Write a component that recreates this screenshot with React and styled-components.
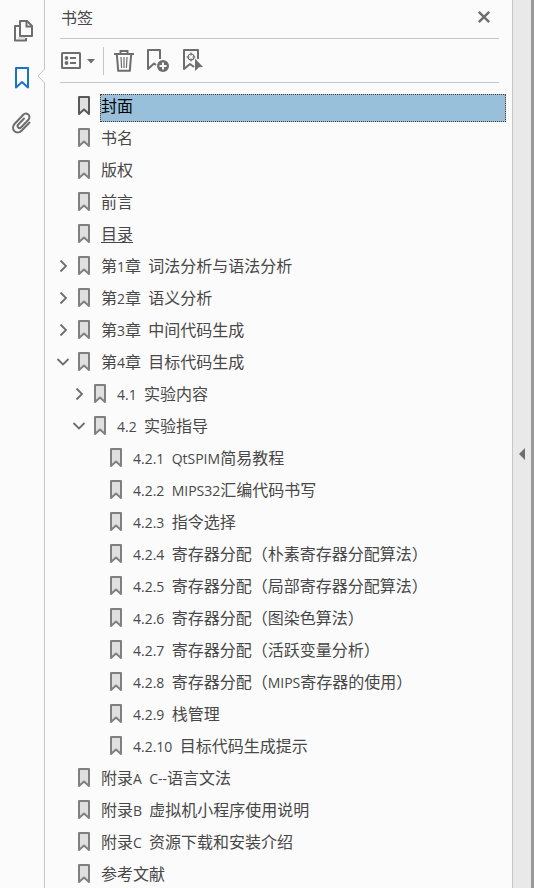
import React, { useState } from 'react';
import styled, { createGlobalStyle } from 'styled-components';

const GlobalStyle = createGlobalStyle`
  * {
    box-sizing: border-box;
  }
  body {
    margin: 0;
    background: #fbfbfb;
    color: #484848;
    font-family: "Noto Sans CJK SC", "Noto Sans", sans-serif;
    font-size: 16px;
  }
  svg {
    display: block;
    overflow: visible;
  }
`;

const Layout = styled.div`
  display: flex;
  height: 100vh;
  overflow: hidden;
`;

const Rail = styled.nav`
  display: flex;
  flex-direction: column;
  align-items: center;
  flex: none;
  width: 45px;
  padding-top: 8px;
  border-right: 1px solid #c6c6c6;
`;

const PlainButton = styled.button`
  display: flex;
  align-items: center;
  justify-content: center;
  flex: none;
  padding: 0;
  border: none;
  background: none;
  color: #6e6e6e;
  cursor: pointer;
`;

const RailButton = styled(PlainButton)`
  position: relative;
  width: 44px;
  height: 46px;
  color: ${({ $active }) => ($active ? '#1a73c8' : '#6e6e6e')};
`;

const Notch = styled.svg`
  position: absolute;
  top: 15px;
  right: -1px;
`;

const Panel = styled.section`
  display: flex;
  flex-direction: column;
  flex: 1;
  min-width: 0;
`;

const Header = styled.header`
  display: flex;
  align-items: center;
  justify-content: space-between;
  flex: none;
  height: 39px;
  margin: 0 13px 0 15px;
  padding-bottom: 5px;
  border-bottom: 1px solid #c6c6c6;
`;

const Title = styled.h1`
  margin: 0;
  padding-left: 1px;
  font-size: 16px;
  font-weight: 400;
  line-height: 24px;
`;

const CloseButton = styled(PlainButton)`
  width: 30px;
  height: 24px;
`;

const Toolbar = styled.div`
  display: flex;
  align-items: center;
  flex: none;
  height: 44px;
  margin: 0 13px 0 15px;
  border-bottom: 1px solid #c6c6c6;
`;

const ToolButton = styled(PlainButton)`
  width: ${({ $width }) => $width}px;
  height: 28px;
`;

const Divider = styled.span`
  width: 1px;
  height: 28px;
  margin: 0 8px 0 7px;
  background: #c6c6c6;
`;

const Tree = styled.ul`
  margin: 0;
  padding: ${({ $nested }) => ($nested ? '0 0 0 16px' : '11px 6px 0 10px')};
  list-style: none;
`;

const Row = styled.div`
  display: flex;
  align-items: flex-start;
  height: 32px;
`;

const Toggle = styled(PlainButton)`
  width: 16px;
  height: 24px;
  margin-right: 7px;
  visibility: ${({ $hidden }) => ($hidden ? 'hidden' : 'visible')};
`;

const Mark = styled.svg`
  flex: none;
  margin: 2px 10px 0 0;
  color: ${({ $selected }) => ($selected ? '#5a5a5a' : '#808080')};
`;

const Label = styled.a`
  flex: 1;
  min-width: 0;
  height: 28px;
  border: 1px dotted ${({ $selected }) => ($selected ? '#5b3a2e' : 'transparent')};
  background: ${({ $selected }) => ($selected ? '#99c0da' : 'none')};
  color: ${({ $selected }) => ($selected ? '#000' : 'inherit')};
  line-height: 20px;
  text-decoration: ${({ $underlined }) => ($underlined ? 'underline' : 'none')};
  text-underline-offset: 2px;
  white-space: pre;
`;

const Latin = styled.span`
  font-family: "Open Sans", "Noto Sans", sans-serif;
  font-size: 14px;
`;

const Splitter = styled.div`
  display: flex;
  flex: none;
  width: 22px;
  border-left: 1px solid #c6c6c6;
  border-right: 3px solid #999;
  background: #e9e9e9;
`;

const SplitterButton = styled(PlainButton)`
  width: 18px;
  padding-top: 20px;
`;

const bookmarks = [
  { title: '封面' },
  { title: '书名' },
  { title: '版权' },
  { title: '前言' },
  { title: '目录', underlined: true },
  { title: '第1章  词法分析与语法分析', children: [] },
  { title: '第2章  语义分析', children: [] },
  { title: '第3章  中间代码生成', children: [] },
  {
    title: '第4章  目标代码生成',
    open: true,
    children: [
      { title: '4.1  实验内容', children: [] },
      {
        title: '4.2  实验指导',
        open: true,
        children: [
          { title: '4.2.1  QtSPIM简易教程' },
          { title: '4.2.2  MIPS32汇编代码书写' },
          { title: '4.2.3  指令选择' },
          { title: '4.2.4  寄存器分配（朴素寄存器分配算法）' },
          { title: '4.2.5  寄存器分配（局部寄存器分配算法）' },
          { title: '4.2.6  寄存器分配（图染色算法）' },
          { title: '4.2.7  寄存器分配（活跃变量分析）' },
          { title: '4.2.8  寄存器分配（MIPS寄存器的使用）' },
          { title: '4.2.9  栈管理' },
          { title: '4.2.10  目标代码生成提示' },
        ],
      },
    ],
  },
  { title: '附录A  C--语言文法' },
  { title: '附录B  虚拟机小程序使用说明' },
  { title: '附录C  资源下载和安装介绍' },
  { title: '参考文献' },
];

// digits and latin letters are set smaller than the chinese text
const renderTitle = (title) => title
  .split(/([\x20-\x7e]+)/)
  .filter(Boolean)
  .map((part) => (/^[\x20-\x7e]/.test(part) ? <Latin key={part}>{part}</Latin> : part));

const PagesIcon = () => (
  <svg width="18" height="22" viewBox="1 0 18 22" fill="none" stroke="currentColor" strokeWidth="2">
    <path d="M7 6H3v14.500h11V18" strokeLinejoin="round" />
    <path d="M6 18h7" stroke="#dcdcdc" />
    <path d="M8 1h7l5 5v10H8z" fill="#fbfbfb" strokeLinejoin="round" />
    <path d="M14.500 1v5.500H20" />
  </svg>
);

const RailBookmarkIcon = () => (
  <svg width="14" height="20" viewBox="0 0 14 20" fill="none" stroke="currentColor" strokeWidth="2">
    <path d="M1 1h12v19.500L7 15l-6 5.500z" strokeLinejoin="round" />
  </svg>
);

const ClipIcon = () => (
  <svg width="20" height="22" viewBox="0 0 20 22" fill="none" stroke="currentColor" strokeWidth="2" strokeLinecap="round">
    <path d="M17.500 10.500l-8 8.200c-2 2-5 2.300-7 .5s-2-5 0-7.200l8.500-9c1.500-1.600 3.800-1.700 5.300-.4s1.500 3.600.1 5.200l-7.200 7.500c-.9.900-2.200 1-3 .2s-.8-2.100.1-3l5.700-6" />
  </svg>
);

const CloseIcon = () => (
  <svg width="12" height="12" viewBox="0 0 12 12" fill="none" stroke="currentColor" strokeWidth="2.400">
    <path d="M.8.8l10.400 10.400M11.200.8L.8 11.200" />
  </svg>
);

const OptionsIcon = () => (
  <svg width="34" height="18" viewBox="0 0 34 18" fill="none" stroke="currentColor" strokeWidth="2">
    <rect x="1" y="1" width="18" height="15" rx=".5" />
    <circle cx="5.500" cy="6" r="1.900" fill="currentColor" stroke="none" />
    <circle cx="5.500" cy="11" r="1.900" fill="currentColor" stroke="none" />
    <path d="M9 6h6M9 11h6" />
    <path d="M26 7h8l-4 4.500z" fill="currentColor" stroke="none" />
  </svg>
);

const TrashIcon = () => (
  <svg width="20" height="22" viewBox="0 0 20 22" fill="none" stroke="currentColor" strokeWidth="2">
    <path d="M0 4h20M6.500 4V1h7v3" />
    <path d="M2.800 4l1.400 16.800h11.600L17.200 4" strokeLinejoin="round" />
    <path d="M7 7l.6 11M10 7v11M13 7l-.6 11" strokeWidth="1.200" />
  </svg>
);

const AddBookmarkIcon = () => (
  <svg width="22" height="23" viewBox="0 0 22 23" fill="none" stroke="currentColor" strokeWidth="2">
    <path d="M13 10V1H1v19l6-5.500 2 1.500" strokeLinejoin="round" />
    <circle cx="16" cy="17" r="6" fill="currentColor" stroke="none" />
    <path d="M12.500 17h7M16 13.500v7" stroke="#fbfbfb" />
  </svg>
);

const FindBookmarkIcon = () => (
  <svg width="20" height="23" viewBox="0 0 20 23" fill="none" stroke="currentColor" strokeWidth="2">
    <path d="M15 10V1H1v19l6-5 4 3" strokeLinejoin="round" />
    <circle cx="8" cy="8" r="3" strokeWidth="1.200" />
    <path d="M8 3.500v3M8 9.500v3M3.500 8h3M9.500 8h3" strokeWidth="1.200" />
    <path d="M12 9.500l8 8.500-4 .3-4 3.700z" fill="currentColor" stroke="none" />
  </svg>
);

const Chevron = ({ open }) => (
  <svg width="12" height="12" viewBox="0 0 12 12" fill="none" stroke="currentColor" strokeWidth="1.800">
    <path d={open ? 'M.5 3L6 8.500 11.500 3' : 'M3.500.5L9 6l-5.500 5.500'} />
  </svg>
);

const BookmarkNode = ({ node, selected, onSelect }) => {
  const [open, setOpen] = useState(Boolean(node.open));
  const isSelected = selected === node.title;

  return (
    <li>
      <Row>
        <Toggle
          type="button"
          aria-label={open ? '折叠' : '展开'}
          aria-expanded={open}
          $hidden={!node.children}
          onClick={() => setOpen(!open)}
        >
          <Chevron open={open} />
        </Toggle>
        <Mark width="12" height="20" viewBox="0 0 12 20" $selected={isSelected}>
          <path d="M1 1h10v17l-5-4.500L1 18z" fill="#e0e0e0" stroke="currentColor" strokeWidth="2" strokeLinejoin="round" />
        </Mark>
        <Label
          href="#"
          $selected={isSelected}
          $underlined={node.underlined}
          onClick={() => onSelect(node.title)}
        >
          {renderTitle(node.title)}
        </Label>
      </Row>
      {open && node.children.length > 0 && (
        <Tree $nested>
          {node.children.map((child) => (
            <BookmarkNode key={child.title} node={child} selected={selected} onSelect={onSelect} />
          ))}
        </Tree>
      )}
    </li>
  );
};

const App = () => {
  const [selected, setSelected] = useState('封面');

  return (
    <Layout>
      <GlobalStyle />
      <Rail>
        <RailButton type="button" aria-label="页面缩略图"><PagesIcon /></RailButton>
        <RailButton type="button" aria-label="书签" $active>
          <RailBookmarkIcon />
          <Notch width="8" height="14" viewBox="0 0 8 14">
            <path d="M8 0L1 7l7 7z" fill="#fbfbfb" />
            <path d="M7.500 0L1 7l6.500 7" fill="none" stroke="#c6c6c6" />
          </Notch>
        </RailButton>
        <RailButton type="button" aria-label="附件"><ClipIcon /></RailButton>
      </Rail>
      <Panel>
        <Header>
          <Title>书签</Title>
          <CloseButton type="button" aria-label="关闭"><CloseIcon /></CloseButton>
        </Header>
        <Toolbar>
          <ToolButton type="button" aria-label="选项" $width={36}><OptionsIcon /></ToolButton>
          <Divider />
          <ToolButton type="button" aria-label="删除" $width={24}><TrashIcon /></ToolButton>
          <ToolButton type="button" aria-label="新建书签" $width={44}><AddBookmarkIcon /></ToolButton>
          <ToolButton type="button" aria-label="查找当前书签" $width={26}><FindBookmarkIcon /></ToolButton>
        </Toolbar>
        <Tree>
          {bookmarks.map((node) => (
            <BookmarkNode key={node.title} node={node} selected={selected} onSelect={setSelected} />
          ))}
        </Tree>
      </Panel>
      <Splitter>
        <SplitterButton type="button" aria-label="折叠面板">
          <svg width="6" height="12" viewBox="0 0 6 12">
            <path d="M6 0v12L0 6z" fill="currentColor" />
          </svg>
        </SplitterButton>
      </Splitter>
    </Layout>
  );
};

export default App;
